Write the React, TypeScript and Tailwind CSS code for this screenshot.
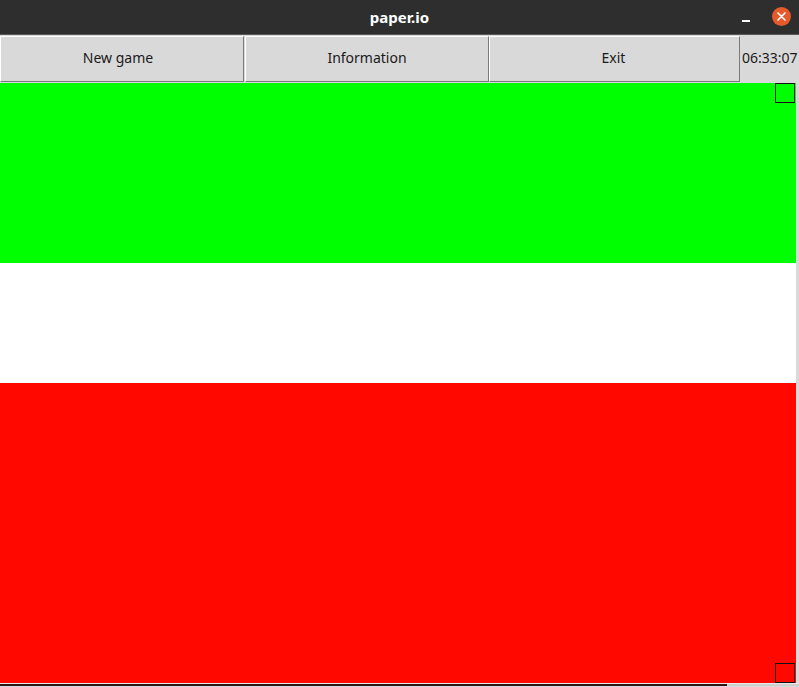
import React from 'react';

const Btn = ({ label, w }: { label: string; w: string }) => (
  <div className={`${w} h-[46px] shrink-0 flex items-center justify-center pb-[3px] bg-[#d9d9d9] border border-t-white border-l-white border-r-[#7a7a7a] border-b-[#7a7a7a] text-[14px] text-[#1a1a1a]`}>
    {label}
  </div>
);

export default function App() {
  return (
    <div className="w-[799px] h-[687px] flex flex-col overflow-hidden bg-[#d9d9d9]" style={{ fontFamily: '"Noto Sans", "DejaVu Sans", sans-serif' }}>
      {/* title bar */}
      <div className="h-[35px] shrink-0 bg-[#2f2e2e] relative flex items-center justify-center border-b border-[#5a5a5a]">
        <span className="text-white font-bold text-[15px]">paper.io</span>
        <div className="absolute right-[49px] top-[20px] w-[8px] h-[2px] bg-white" />
        <div className="absolute right-[8px] top-[7px] w-[19px] h-[19px] rounded-full bg-[#e45a2b] flex items-center justify-center">
          <svg width="9" height="9" viewBox="0 0 9 9">
            <path d="M1 1 L8 8 M8 1 L1 8" stroke="white" strokeWidth="1.6" strokeLinecap="round" />
          </svg>
        </div>
      </div>

      {/* menu row */}
      <div className="h-[48px] shrink-0 flex items-start pt-px">
        <Btn label="New game" w="w-[244px] pr-[8px]" />
        <div className="w-px shrink-0" />
        <Btn label="Information" w="w-[244px]" />
        <Btn label="Exit" w="w-[251px] pr-[2px]" />
        <div className="flex-1 h-[46px] flex items-center pb-[3px] pl-[2px] text-[14px] text-[#1a1a1a] whitespace-nowrap">06:33:07</div>
      </div>

      {/* canvas */}
      <div className="h-[600px] shrink-0 flex">
        <div className="w-[796px] h-full flex flex-col relative">
          <div className="h-[180px] bg-[#00ff00]" />
          <div className="h-[120px] bg-white" />
          <div className="h-[300px] bg-[#fe0800]" />
          <div className="absolute right-px top-0 w-[20px] h-[20px] border border-[#111]" />
          <div className="absolute right-px bottom-0 w-[20px] h-[20px] border border-[#111]" />
        </div>
        <div className="flex-1 bg-[#d9d9d9]" />
      </div>

      {/* bottom edge */}
      <div className="h-[1px] shrink-0 bg-[#e8e8e8]" />
      <div className="h-[2px] shrink-0 flex">
        <div className="w-[727px] bg-[#2a1414]" />
        <div className="flex-1 bg-[#cfcfcf]" />
      </div>
    </div>
  );
}
